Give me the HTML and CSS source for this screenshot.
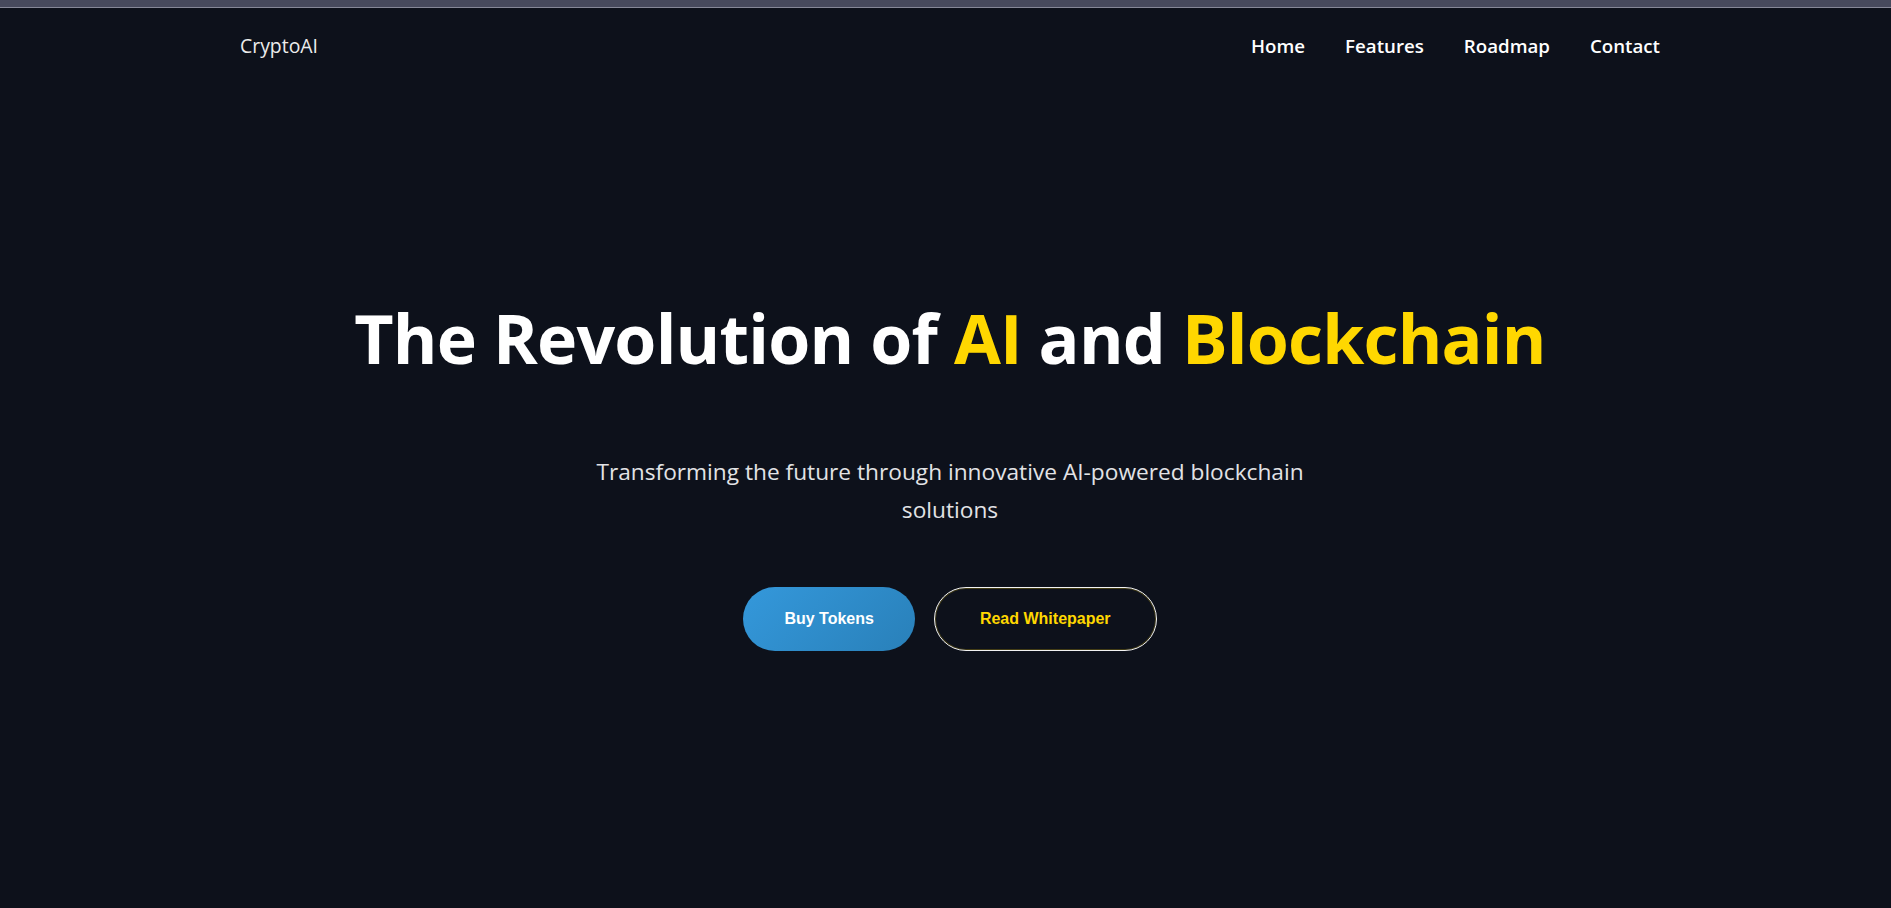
FILE: index.html
```html
<!DOCTYPE html>
<html lang="en">
<head>
<meta charset="utf-8">
<title>CryptoAI</title>
<link rel="stylesheet" href="styles.css">
</head>
<body>
<div class="topbar"></div>
<div class="page">
  <header class="nav">
    <a class="logo" href="#">CryptoAI</a>
    <nav class="links">
      <a href="#">Home</a>
      <a href="#">Features</a>
      <a href="#">Roadmap</a>
      <a href="#">Contact</a>
    </nav>
  </header>
  <main class="hero">
    <h1 class="title">The Revolution of <span class="gold">AI</span> and <span class="gold">Blockchain</span></h1>
    <p class="subtitle">Transforming the future through innovative AI-powered blockchain solutions</p>
    <div class="actions">
      <a class="btn btn-primary" href="#">Buy Tokens</a>
      <a class="btn btn-outline" href="#">Read Whitepaper</a>
    </div>
  </main>
</div>
</body>
</html>
```

FILE: styles.css
```css
* { box-sizing: border-box; }
html, body {
  margin: 0;
  padding: 0;
  background: #0d111b;
  height: 100%;
}
body {
  font-family: "Open Sans", "Noto Sans", sans-serif;
  color: #fff;
  overflow: hidden;
}
a { text-decoration: none; color: inherit; }

.topbar {
  height: 8px;
  background: #474a5d;
  border-bottom: 1px solid #868898;
}

.page {
  padding-left: 9px;
}

.nav {
  width: 1420px;
  margin: 0 auto;
  height: 74px;
  display: flex;
  align-items: center;
  justify-content: space-between;
}
.logo {
  font-size: 19.4px;
  font-weight: 400;
  color: #ececec;
}
.links {
  display: flex;
  gap: 40px;
}
.links a {
  font-size: 18.7px;
  font-weight: 600;
  color: #fff;
}

.hero {
  text-align: center;
  padding-top: 215px;
}
.title {
  margin: 0;
  font-size: 68px;
  line-height: 1.2;
  font-weight: 700;
  letter-spacing: -0.8px;
  color: #fff;
}
.gold { color: #ffd700; }

.subtitle {
  max-width: 780px;
  margin: 74px auto 0;
  font-size: 22.7px;
  line-height: 38px;
  color: #e2e3e6;
}

.actions {
  margin-top: 58px;
  display: flex;
  justify-content: center;
  align-items: center;
  gap: 19px;
}
.btn {
  font-family: "Liberation Sans", Arial, sans-serif;
  font-weight: 700;
  font-size: 16px;
  line-height: 18px;
  border-radius: 999px;
}
.btn-primary {
  padding: 23px 41px;
  background: linear-gradient(135deg, #3498db, #2980b9);
  color: #fff;
}
.btn-outline {
  padding: 22px 45px;
  border: 1px solid #f2f2f2;
  box-shadow: inset 0 0 0 1px rgba(255, 215, 0, 0.22);
  color: #ffd700;
}
```
